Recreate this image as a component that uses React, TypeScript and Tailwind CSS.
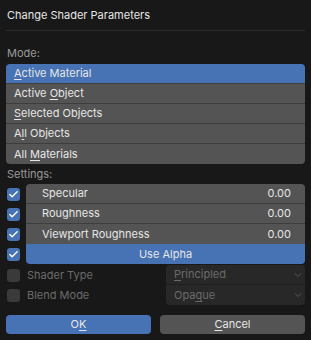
import { Check, ChevronDown } from "lucide-react";

const font = { fontFamily: "Inter, 'Noto Sans', sans-serif" };

function Row({
  children,
  active = false,
  last = false
}: {
  children: React.ReactNode;
  active?: boolean;
  last?: boolean;
}) {
  return (
    <div
      className={`flex h-5 items-center px-2 ${active ? "bg-[#4772b3]" : "bg-[#545454]"} ${
        last ? "" : "border-b border-[#3d3d3d]"
      }`}
    >
      {children}
    </div>
  );
}

function Box({ on = true }: { on?: boolean }) {
  return on ? (
    <div className="flex h-[13px] w-[13px] items-center justify-center rounded-[3px] bg-[#4772b3]">
      <Check className="h-[11px] w-[11px] text-white" strokeWidth={3} />
    </div>
  ) : (
    <div className="h-[13px] w-[13px] rounded-[3px] bg-[#3a3a3a]" />
  );
}

function Setting({ label, last = false }: { label: string; last?: boolean }) {
  return (
    <div className="flex h-5 items-center">
      <div className="flex w-[20px] justify-start pl-px">
        <Box />
      </div>
      <div
        className={`flex h-5 flex-1 items-center justify-between bg-[#545454] pl-4 pr-[14px] ${
          last ? "" : "border-b border-[#3d3d3d]"
        }`}
      >
        <span>{label}</span>
        <span>0.00</span>
      </div>
    </div>
  );
}

export default function App() {
  return (
    <div
      className="flex h-[340px] w-[311px] flex-col bg-[#181818] px-[6px] text-[11px] text-[#e6e6e6] [&_u]:underline-offset-2"
      style={font}
    >
      <div className="flex h-[30px] items-center pl-px">Change Shader Parameters</div>
      <div className="h-px bg-[#2b2b2b]" />
      <div className="flex h-[33px] items-end pb-[3px] pl-px text-[#9a9a9a]">Mode:</div>
      <div className="overflow-hidden rounded-[4px]">
        <Row active>
          <span>
            <u>A</u>ctive Material
          </span>
        </Row>
        <Row>
          <span>
            Active <u>O</u>bject
          </span>
        </Row>
        <Row>
          <span>
            <u>S</u>elected Objects
          </span>
        </Row>
        <Row>
          <span>
            A<u>l</u>l Objects
          </span>
        </Row>
        <Row last>
          <span>
            All <u>M</u>aterials
          </span>
        </Row>
      </div>
      <div className="flex h-[20px] items-center pl-px text-[#9a9a9a]">Settings:</div>
      <div className="flex flex-col">
        <div className="overflow-hidden">
          <div className="flex h-5 items-center">
            <div className="w-[20px] pl-px">
              <Box />
            </div>
            <div className="flex h-5 flex-1 items-center justify-between rounded-t-[4px] border-b border-[#3d3d3d] bg-[#545454] pl-4 pr-[14px]">
              <span>Specular</span>
              <span>0.00</span>
            </div>
          </div>
          <Setting label="Roughness" />
          <Setting label="Viewport Roughness" last />
          <div className="flex h-5 items-center">
            <div className="w-[20px] pl-px">
              <Box />
            </div>
            <div className="flex h-5 flex-1 items-center justify-center rounded-b-[4px] bg-[#4772b3]">
              Use Alpha
            </div>
          </div>
        </div>
        <div className="mt-px flex">
          <div className="flex w-[160px] flex-col text-[#6b6b6b]">
            <div className="flex h-5 items-center gap-[7px] pl-px">
              <Box on={false} />
              <span>Shader Type</span>
            </div>
            <div className="flex h-5 items-center gap-[7px] pl-px">
              <Box on={false} />
              <span>Blend Mode</span>
            </div>
          </div>
          <div className="flex flex-1 flex-col overflow-hidden rounded-[4px] bg-[#282828] text-[#6b6b6b]">
            <div className="flex h-5 items-center justify-between border-b border-[#1e1e1e] pl-2 pr-px">
              <span>
                <u>P</u>rincipled
              </span>
              <ChevronDown className="h-3 w-3 text-[#555]" />
            </div>
            <div className="flex h-5 items-center justify-between pl-2 pr-px">
              <span>
                Opa<u>q</u>ue
              </span>
              <ChevronDown className="h-3 w-3 text-[#555]" />
            </div>
          </div>
        </div>
      </div>
      <div className="mt-[10px] flex gap-[9px]">
        <div className="flex h-[19px] flex-1 items-center justify-center rounded-[4px] bg-[#4772b3]">
          <span>
            O<u>K</u>
          </span>
        </div>
        <div className="flex h-[19px] flex-1 items-center justify-center rounded-[4px] bg-[#545454]">
          <span>
            <u>C</u>ancel
          </span>
        </div>
      </div>
    </div>
  );
}
